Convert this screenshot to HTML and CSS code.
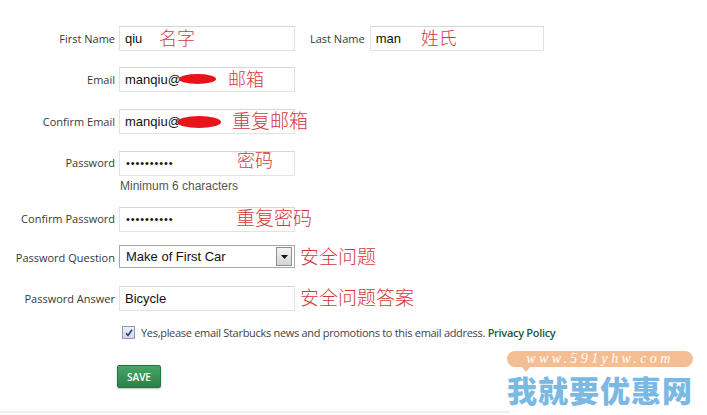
FILE: index.html
```html
<!DOCTYPE html>
<html lang="zh-CN">
<head>
  <meta charset="UTF-8" />
  <meta name="viewport" content="width=device-width, initial-scale=1.0" />
  <title>Create Account</title>
  <link rel="stylesheet" href="styles.css">
</head>
<body>
<form class="account-form">

  <div class="row">
    <label class="lbl">First Name</label>
    <div class="field">
      <input type="text" value="qiu" />
      <span class="note note-first">名字</span>
    </div>
    <label class="lbl lbl-inline">Last Name</label>
    <div class="field field-last">
      <input type="text" value="man" />
      <span class="note note-last">姓氏</span>
    </div>
  </div>

  <div class="row row-email">
    <label class="lbl">Email</label>
    <div class="field">
      <input type="text" value="manqiu@" />
      <span class="blot blot-a"></span>
      <span class="note note-email">邮箱</span>
    </div>
  </div>

  <div class="row">
    <label class="lbl">Confirm Email</label>
    <div class="field">
      <input type="text" value="manqiu@" />
      <span class="blot blot-b"></span>
      <span class="note note-cemail">重复邮箱</span>
    </div>
  </div>

  <div class="row">
    <label class="lbl">Password</label>
    <div class="field">
      <input type="text" class="pw" value="••••••••••" />
      <span class="note note-pw">密码</span>
    </div>
  </div>
  <div class="hint">Minimum 6 characters</div>

  <div class="row row-cpw">
    <label class="lbl">Confirm Password</label>
    <div class="field">
      <input type="text" class="pw" value="••••••••••" />
      <span class="note note-cpw">重复密码</span>
    </div>
  </div>

  <div class="row">
    <label class="lbl">Password Question</label>
    <div class="field">
      <div class="select">
        <span class="select-text">Make of First Car</span>
        <span class="select-arrow">
          <svg width="7" height="4" viewBox="0 0 7 4"><path d="M0 0h7L3.5 4z" fill="#111"/></svg>
        </span>
      </div>
      <span class="note note-q">安全问题</span>
    </div>
  </div>

  <div class="row row-answer">
    <label class="lbl">Password Answer</label>
    <div class="field">
      <input type="text" value="Bicycle" />
      <span class="note note-q">安全问题答案</span>
    </div>
  </div>

  <div class="opt-in">
    <span class="check">
      <svg width="10" height="10" viewBox="0 0 10 10"><path d="M2 5.2l2 2.3L8 1.8" fill="none" stroke="#2c3f7a" stroke-width="1.6"/></svg>
    </span>
    <span>Yes,please email Starbucks news and promotions to this email address. <a href="#">Privacy Policy</a></span>
  </div>

  <button type="button" class="btn-save">SAVE</button>

  <div class="rule"></div>
</form>

<div class="watermark">
  <div class="wm-url">www.591yhw.com</div>
  <div class="wm-name">我就要优惠网</div>
</div>
</body>
</html>
```

FILE: styles.css
```css
body {
  margin: 0;
  background: #fff;
  font-family: "Open Sans", "Noto Sans CJK SC", sans-serif;
  color: #3a3a3a;
  position: relative;
  height: 415px;
  overflow: hidden;
}
.account-form {
  padding-top: 26px;
}
.row {
  display: flex;
  align-items: center;
  height: 25px;
  margin-bottom: 16px;
}
.row-email {
  margin-bottom: 17px;
}
.row-cpw,
.row-answer {
  margin-bottom: 14px;
}
.lbl {
  width: 115px;
  flex-shrink: 0;
  text-align: right;
  font-size: 11px;
  color: #383838;
  margin-right: 4px;
}
.lbl-inline {
  width: auto;
  margin: 0 5px 0 15px;
}
.field {
  position: relative;
  width: 176px;
  height: 25px;
}
.field-last {
  width: 174px;
}
.field input {
  width: 100%;
  height: 25px;
  box-sizing: border-box;
  border: 1px solid #e2e2e2;
  border-top-color: #d6d6d6;
  padding: 0 5px;
  margin: 0;
  font-family: "Liberation Sans", Arial, sans-serif;
  font-size: 13px;
  color: #111;
  background: #fff;
  outline: none;
}
.field input.pw {
  font-size: 11px;
  letter-spacing: 0.9px;
  padding-left: 6px;
}
.note {
  position: absolute;
  top: 50%;
  transform: translateY(-58%);
  font-family: "Noto Sans CJK SC", sans-serif;
  font-size: 18px;
  font-weight: 300;
  color: #d23a3a;
  white-space: nowrap;
  pointer-events: none;
}
.note-first { left: 40px; }
.note-last { left: 51px; }
.note-email { left: 109px; }
.note-cemail { left: 113px; font-size: 19px; }
.note-pw { left: 118px; transform: translateY(-66%); }
.note-cpw { left: 117px; font-size: 19px; }
.note-q { left: 181px; font-size: 19px; }
.blot {
  position: absolute;
  background: #e8141a;
  border-radius: 50%;
}
.blot-a {
  left: 60px;
  top: 7px;
  width: 37px;
  height: 10px;
}
.blot-b {
  left: 58px;
  top: 7px;
  width: 44px;
  height: 12px;
}
.hint {
  margin: -12px 0 12px 120px;
  font-family: "Liberation Sans", Arial, sans-serif;
  font-size: 12px;
  color: #555;
  height: 15px;
}
.select {
  display: flex;
  align-items: center;
  height: 23px;
  box-sizing: border-box;
  border: 1px solid #a8a8a8;
  background: #fff;
  padding-left: 6px;
  font-family: "Liberation Sans", Arial, sans-serif;
  font-size: 13px;
  color: #111;
}
.select-text {
  flex: 1;
}
.select-arrow {
  display: flex;
  align-items: center;
  justify-content: center;
  width: 14px;
  height: 17px;
  margin-right: 2px;
  border: 1px solid #8f8f8f;
  background: linear-gradient(#f4f4f4, #d4d4d4);
}
.opt-in {
  display: flex;
  align-items: center;
  margin: 2px 0 0 122px;
  font-size: 11px;
  letter-spacing: -0.3px;
  color: #444;
}
.check {
  display: flex;
  align-items: center;
  justify-content: center;
  width: 11px;
  height: 11px;
  margin-right: 6px;
  border: 1px solid #8d9bb3;
  background: linear-gradient(#e9eef8, #cfd9ec);
}
.opt-in a {
  color: #1f5a3c;
  font-weight: 600;
  text-decoration: none;
}
.btn-save {
  display: block;
  margin: 25px 0 0 117px;
  width: 44px;
  height: 23px;
  padding: 0;
  border: 1px solid #2a7342;
  border-radius: 2px;
  background: linear-gradient(#47a566, #2b8048);
  box-shadow: 0 1px 2px rgba(0,0,0,0.25);
  color: #fff;
  font-family: "Open Sans", sans-serif;
  font-size: 10px;
  font-weight: 600;
}
.rule {
  margin-top: 23px;
  width: 510px;
  border-top: 2px solid #f0f0f0;
}
.watermark {
  position: absolute;
  left: 507px;
  top: 351px;
  width: 186px;
}
.wm-url {
  position: relative;
  height: 16px;
  line-height: 15px;
  border-radius: 8px;
  background: #f5bd92;
  color: #fff;
  text-align: center;
  font-family: "Liberation Serif", serif;
  font-style: italic;
  font-size: 14px;
  letter-spacing: 3.4px;
}
.wm-url::after {
  content: "";
  position: absolute;
  left: 14px;
  top: 15px;
  border-left: 5px solid transparent;
  border-right: 5px solid transparent;
  border-top: 6px solid #f5bd92;
}
.wm-name {
  margin-top: 9px;
  font-family: "Noto Sans CJK SC", sans-serif;
  font-weight: 900;
  font-size: 30px;
  line-height: 26px;
  letter-spacing: 1px;
  color: #79b9e3;
  white-space: nowrap;
}
```
